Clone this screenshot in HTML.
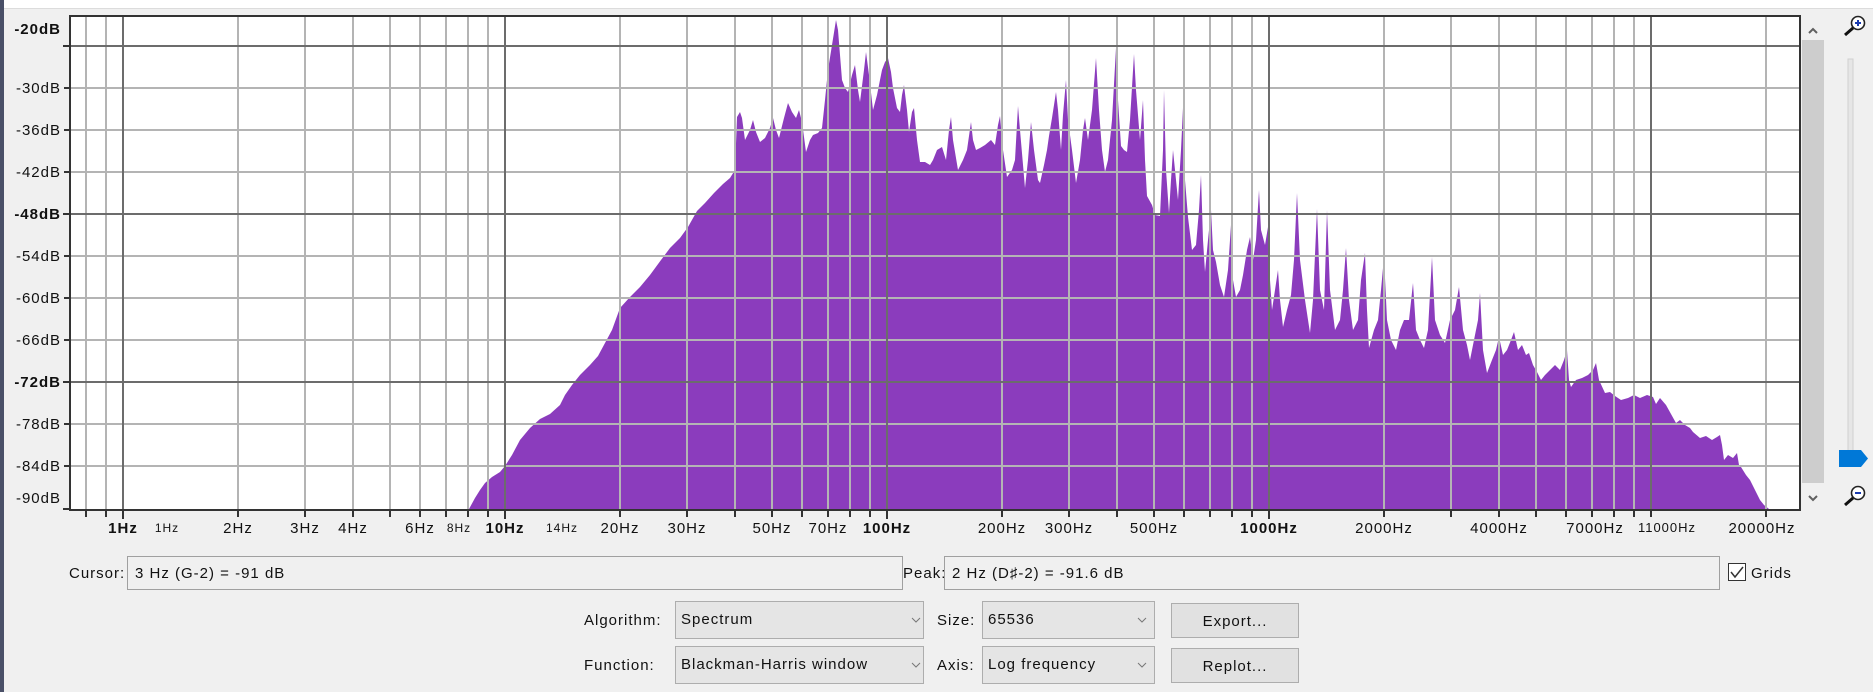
<!DOCTYPE html>
<html><head><meta charset="utf-8"><style>
html,body{margin:0;padding:0;background:#f0f0f0;width:1873px;height:692px;overflow:hidden}
svg{display:block}
text{font-family:"Liberation Sans",sans-serif;letter-spacing:1px}
</style></head><body>
<svg width="1873" height="692" viewBox="0 0 1873 692" xmlns="http://www.w3.org/2000/svg">
<rect x="0" y="0" width="1873" height="692" fill="#f0f0f0"/>
<rect x="0" y="0" width="1873" height="8" fill="#ffffff"/>
<line x1="4" y1="8.5" x2="1873" y2="8.5" stroke="#dcdcdc"/>
<rect x="0" y="0" width="4" height="692" fill="#4a5068"/>
<!-- plot -->
<rect x="70" y="16" width="1730" height="494" fill="#ffffff"/>
<polygon fill="#8b3cbd" points="469,510 469,509 475,498 480,490 485,483 492,477 500,472 505,466 512,455 520,440 530,428 540,419 550,414 560,405 565,395 572,385 580,375 590,365 598,356 605,343 612,330 620,308 630,297 640,287 650,275 661,260 670,248 680,238 688,227 697,211 705,203 714,193 723,184 730,178 735,170 737,117 740,112 742,118 745,140 750,130 753,120 756,132 760,142 765,138 770,128 773,118 776,130 779,138 784,118 788,103 792,112 796,118 799,110 802,122 806,152 810,140 813,135 818,133 822,128 825,100 828,70 832,45 836,20 838,30 842,80 845,88 848,92 852,75 855,65 858,90 860,102 864,70 866,52 869,75 873,110 877,95 882,70 885,62 888,58 891,72 893,88 897,108 900,112 902,95 904,85 907,110 909,132 912,112 914,108 917,140 920,162 925,162 930,165 933,160 937,150 942,147 946,160 949,130 951,117 953,140 958,170 963,160 967,150 971,122 973,140 976,150 980,148 985,145 991,140 995,145 998,125 1000,116 1003,150 1007,177 1012,170 1015,160 1018,106 1020,130 1025,188 1028,160 1031,122 1034,150 1038,180 1040,183 1044,165 1047,150 1049,136 1052,118 1056,92 1058,110 1061,150 1063,115 1066,80 1068,120 1072,150 1076,183 1080,160 1083,130 1085,118 1088,140 1092,110 1096,58 1099,110 1102,150 1105,172 1108,160 1112,120 1116,48 1118,100 1121,146 1124,150 1127,152 1130,120 1134,54 1136,90 1140,140 1143,100 1145,160 1147,196 1152,205 1155,215 1160,216 1163,150 1164,90 1166,170 1169,213 1171,180 1173,150 1175,170 1178,200 1181,150 1183,108 1185,180 1188,217 1192,250 1196,245 1199,210 1201,175 1203,240 1205,272 1208,240 1211,210 1213,250 1216,262 1220,285 1224,297 1228,270 1231,225 1233,280 1236,297 1240,290 1243,275 1247,250 1250,237 1253,260 1256,240 1259,190 1261,230 1265,245 1268,227 1270,280 1272,310 1275,290 1278,270 1280,300 1283,327 1287,310 1291,295 1294,260 1297,193 1300,260 1305,300 1310,333 1313,300 1317,209 1320,290 1324,310 1327,210 1330,290 1335,330 1340,320 1343,290 1346,248 1349,300 1353,330 1358,320 1361,280 1365,253 1367,310 1369,348 1374,330 1378,320 1381,290 1384,257 1387,320 1391,340 1396,350 1400,330 1404,320 1409,320 1413,283 1416,330 1420,340 1424,348 1428,330 1432,257 1435,320 1440,335 1445,343 1450,320 1455,310 1459,287 1463,330 1467,345 1470,360 1474,340 1478,320 1480,293 1483,350 1487,373 1492,360 1496,350 1499,337 1503,355 1507,350 1511,340 1514,332 1518,350 1522,345 1526,355 1529,353 1533,365 1537,372 1541,380 1545,375 1550,370 1555,365 1560,370 1564,360 1567,350 1569,380 1571,387 1576,380 1582,378 1588,375 1593,370 1596,363 1599,380 1605,393 1610,392 1615,396 1621,400 1628,398 1634,395 1640,398 1647,395 1653,397 1656,404 1660,398 1666,405 1671,414 1676,423 1680,420 1685,425 1690,428 1693,432 1700,438 1706,436 1712,440 1717,437 1720,435 1722,445 1724,460 1728,455 1733,458 1737,453 1739,465 1741,467 1746,475 1750,480 1755,490 1760,500 1764,505 1769,509 1769,510"/>
<!-- minor grid -->
<g stroke="#b4b4b4" stroke-width="2" fill="none">
<path d="M70 88H1800M70 130H1800M70 172H1800M70 256H1800M70 298H1800M70 340H1800M70 424H1800M70 466H1800"/>
<path d="M86 16V510M106 16V510M238 16V510M305 16V510M353 16V510M390 16V510M420 16V510M446 16V510M468 16V510M488 16V510M620 16V510M687 16V510M735 16V510M772 16V510M802 16V510M828 16V510M850 16V510M870 16V510M1002 16V510M1069 16V510M1117 16V510M1154 16V510M1184 16V510M1210 16V510M1232 16V510M1252 16V510M1384 16V510M1451 16V510M1499 16V510M1536 16V510M1566 16V510M1592 16V510M1614 16V510M1634 16V510M1766 16V510"/>
</g>
<g stroke="#6c6c6c" stroke-width="2" fill="none">
<path d="M70 46H1800M70 214H1800M70 382H1800"/>
<path d="M123 16V510M505 16V510M887 16V510M1269 16V510M1651 16V510"/>
</g>
<rect x="70" y="16" width="1730" height="494" fill="none" stroke="#333" stroke-width="2"/>
<!-- y ticks -->
<g stroke="#333" stroke-width="2"><path d="M63 46H70M64 88H70M64 130H70M64 172H70M63 214H70M64 256H70M64 298H70M64 340H70M63 382H70M64 424H70M64 466H70M63 509H70"/></g>
<!-- x ticks -->
<g stroke="#333" stroke-width="2"><path d="M86 510V517M106 510V517M123 510V519M238 510V517M305 510V517M353 510V517M390 510V517M420 510V517M446 510V517M468 510V517M488 510V517M505 510V519M620 510V517M687 510V517M735 510V517M772 510V517M802 510V517M828 510V517M850 510V517M870 510V517M887 510V519M1002 510V517M1069 510V517M1117 510V517M1154 510V517M1184 510V517M1210 510V517M1232 510V517M1252 510V517M1269 510V519M1384 510V517M1451 510V517M1499 510V517M1536 510V517M1566 510V517M1592 510V517M1614 510V517M1634 510V517M1651 510V517M1766 510V517"/></g>
<!-- y labels -->
<g font-size="15" fill="#111" text-anchor="end">
<text x="61" y="34" font-weight="bold">-20dB</text>
<text x="61" y="93">-30dB</text>
<text x="61" y="135">-36dB</text>
<text x="61" y="177">-42dB</text>
<text x="61" y="219" font-weight="bold">-48dB</text>
<text x="61" y="261">-54dB</text>
<text x="61" y="303">-60dB</text>
<text x="61" y="345">-66dB</text>
<text x="61" y="387" font-weight="bold">-72dB</text>
<text x="61" y="429">-78dB</text>
<text x="61" y="471">-84dB</text>
<text x="61" y="503">-90dB</text>
</g>
<!-- x labels -->
<g font-size="15" fill="#111" text-anchor="middle">
<text x="123" y="533" font-weight="bold">1Hz</text>
<text x="167" y="532" font-size="12">1Hz</text>
<text x="238" y="533">2Hz</text>
<text x="305" y="533">3Hz</text>
<text x="353" y="533">4Hz</text>
<text x="420" y="533">6Hz</text>
<text x="459" y="532" font-size="12">8Hz</text>
<text x="505" y="533" font-weight="bold">10Hz</text>
<text x="562" y="532" font-size="12">14Hz</text>
<text x="620" y="533">20Hz</text>
<text x="687" y="533">30Hz</text>
<text x="772" y="533">50Hz</text>
<text x="828" y="533">70Hz</text>
<text x="887" y="533" font-weight="bold">100Hz</text>
<text x="1002" y="533">200Hz</text>
<text x="1069" y="533">300Hz</text>
<text x="1154" y="533">500Hz</text>
<text x="1269" y="533" font-weight="bold">1000Hz</text>
<text x="1384" y="533">2000Hz</text>
<text x="1499" y="533">4000Hz</text>
<text x="1595" y="533">7000Hz</text>
<text x="1667" y="532" font-size="13">11000Hz</text>
<text x="1762" y="533">20000Hz</text>
</g>
<!-- scrollbar -->
<rect x="1802" y="40" width="22" height="443" fill="#cdcdcd"/>
<path d="M1809 33L1813 29L1817 33" stroke="#606060" stroke-width="2" fill="none"/>
<path d="M1809 496L1813 500L1817 496" stroke="#606060" stroke-width="2" fill="none"/>
<!-- zoom slider -->
<rect x="1848" y="59" width="5" height="392" fill="#e6e6e6" stroke="#d0d0d0"/>
<path d="M1839 450H1861L1868 458.5L1861 467H1839Z" fill="#0078d7"/>
<g>
<circle cx="1858" cy="23" r="6.5" fill="#fff" stroke="#222" stroke-width="1.6"/>
<path d="M1855 23H1861M1858 20V26" stroke="#1a3bb0" stroke-width="2"/>
<path d="M1853 28L1845 35" stroke="#111" stroke-width="3"/>
<circle cx="1858" cy="493" r="6.5" fill="#fff" stroke="#222" stroke-width="1.6"/>
<path d="M1855 493H1861" stroke="#1a3bb0" stroke-width="2"/>
<path d="M1853 498L1845 505" stroke="#111" stroke-width="3"/>
</g>
<!-- cursor/peak -->
<g font-size="15" fill="#111">
<text x="69" y="578">Cursor:</text>
<rect x="127.5" y="556.5" width="775" height="33" fill="#f0f0f0" stroke="#a0a0a0"/>
<text x="135" y="578">3 Hz (G-2) = -91 dB</text>
<text x="903" y="578">Peak:</text>
<rect x="944.5" y="556.5" width="775" height="33" fill="#f0f0f0" stroke="#a0a0a0"/>
<text x="952" y="578">2 Hz (D♯-2) = -91.6 dB</text>
<rect x="1728.5" y="563.5" width="17" height="17" fill="#fff" stroke="#333"/>
<path d="M1731 572L1735 577L1743 567" stroke="#333" stroke-width="1.5" fill="none"/>
<text x="1751" y="578">Grids</text>
</g>
<!-- controls -->
<g font-size="15" fill="#111">
<text x="584" y="625">Algorithm:</text>
<rect x="675.5" y="601.5" width="248" height="37" fill="#e5e5e5" stroke="#adadad"/>
<text x="681" y="624">Spectrum</text>
<path d="M912 618L916 622L920 618" stroke="#777" fill="none"/>
<text x="937" y="625">Size:</text>
<rect x="982.5" y="601.5" width="172" height="37" fill="#e5e5e5" stroke="#adadad"/>
<text x="988" y="624">65536</text>
<path d="M1138 618L1142 622L1146 618" stroke="#777" fill="none"/>
<rect x="1171.5" y="603.5" width="127" height="34" fill="#e1e1e1" stroke="#adadad"/>
<text x="1235" y="626" text-anchor="middle">Export...</text>
<text x="584" y="670">Function:</text>
<rect x="675.5" y="646.5" width="248" height="37" fill="#e5e5e5" stroke="#adadad"/>
<text x="681" y="669">Blackman-Harris window</text>
<path d="M912 663L916 667L920 663" stroke="#777" fill="none"/>
<text x="937" y="670">Axis:</text>
<rect x="982.5" y="646.5" width="172" height="37" fill="#e5e5e5" stroke="#adadad"/>
<text x="988" y="669">Log frequency</text>
<path d="M1138 663L1142 667L1146 663" stroke="#777" fill="none"/>
<rect x="1171.5" y="648.5" width="127" height="34" fill="#e1e1e1" stroke="#adadad"/>
<text x="1235" y="671" text-anchor="middle">Replot...</text>
</g>
</svg>
</body></html>
